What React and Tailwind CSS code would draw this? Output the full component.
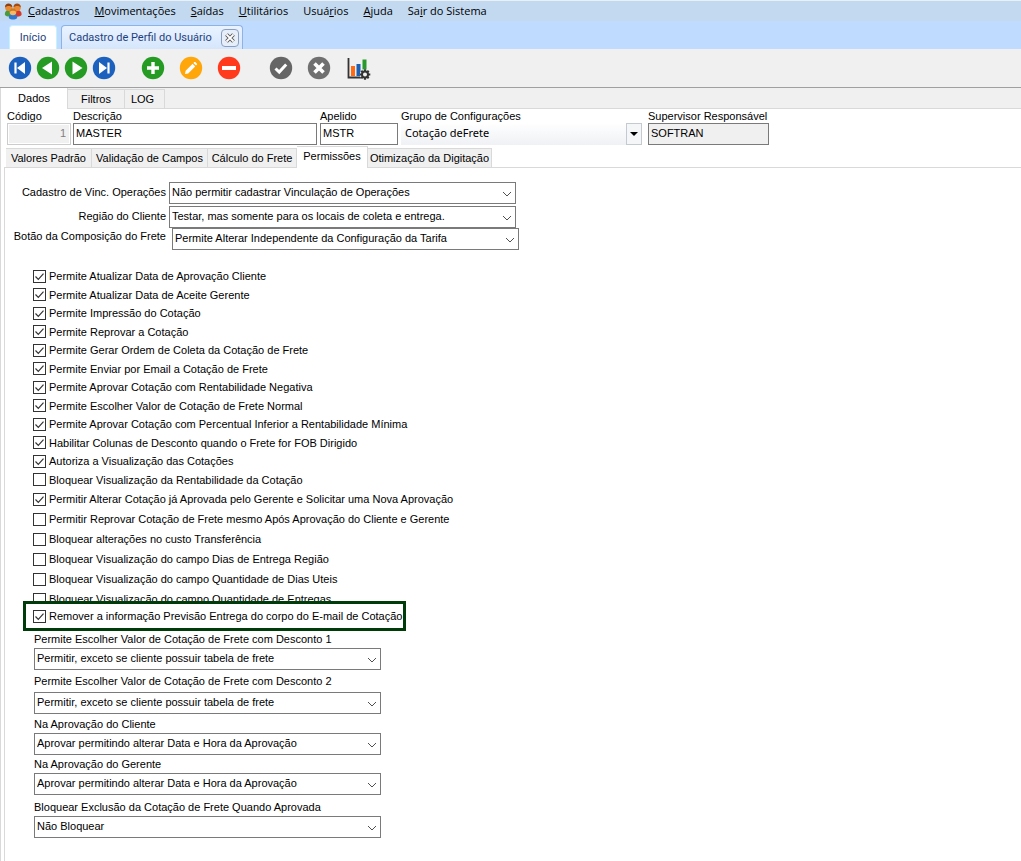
import React from 'react';

const MENU = [
  { before: '', key: 'C', after: 'adastros' },
  { before: '', key: 'M', after: 'ovimentações' },
  { before: '', key: 'S', after: 'aídas' },
  { before: '', key: 'U', after: 'tilitários' },
  { before: 'Usuá', key: 'r', after: 'ios' },
  { before: '', key: 'A', after: 'juda' },
  { before: 'Sa', key: 'i', after: 'r do Sistema' },
];

const PERMISSIONS = [
  { label: 'Permite Atualizar Data de Aprovação Cliente', checked: true },
  { label: 'Permite Atualizar Data de Aceite Gerente', checked: true },
  { label: 'Permite Impressão do Cotação', checked: true },
  { label: 'Permite Reprovar a Cotação', checked: true },
  { label: 'Permite Gerar Ordem de Coleta da Cotação de Frete', checked: true },
  { label: 'Permite Enviar por Email a Cotação de Frete', checked: true },
  { label: 'Permite Aprovar Cotação com Rentabilidade Negativa', checked: true },
  { label: 'Permite Escolher Valor de Cotação de Frete Normal', checked: true },
  { label: 'Permite Aprovar Cotação com Percentual Inferior a Rentabilidade Mínima', checked: true },
  { label: 'Habilitar Colunas de Desconto quando o Frete for FOB Dirigido', checked: true },
  { label: 'Autoriza a Visualização das Cotações', checked: true },
  { label: 'Bloquear Visualização da Rentabilidade da Cotação', checked: false },
];

const RESTRICTIONS = [
  { label: 'Permitir Alterar Cotação já Aprovada pelo Gerente e Solicitar uma Nova Aprovação', checked: true },
  { label: 'Permitir Reprovar Cotação de Frete mesmo Após Aprovação do Cliente e Gerente', checked: false },
  { label: 'Bloquear alterações no custo Transferência', checked: false },
  { label: 'Bloquear Visualização do campo Dias de Entrega Região', checked: false },
  { label: 'Bloquear Visualização do campo Quantidade de Dias Uteis', checked: false },
  { label: 'Bloquear Visualização do campo Quantidade de Entregas', checked: false },
];

const RULES = [
  { id: 'desc1', label: 'Permite Escolher Valor de Cotação de Frete com Desconto 1', value: 'Permitir, exceto se cliente possuir tabela de frete', space: 'gap-px' },
  { id: 'desc2', label: 'Permite Escolher Valor de Cotação de Frete com Desconto 2', value: 'Permitir, exceto se cliente possuir tabela de frete', space: 'mt-[3px] gap-[3px]' },
  { id: 'cliente', label: 'Na Aprovação do Cliente', value: 'Aprovar permitindo alterar Data e Hora da Aprovação', space: 'mt-0.5 gap-px' },
  { id: 'gerente', label: 'Na Aprovação do Gerente', value: 'Aprovar permitindo alterar Data e Hora da Aprovação', space: 'mt-px gap-px' },
  { id: 'exclusao', label: 'Bloquear Exclusão da Cotação de Frete Quando Aprovada', value: 'Não Bloquear', space: 'mt-1 gap-px' },
];

const Select = ({ id, value }) => (
  <div className="relative w-full max-w-[347px]">
    <select
      id={id}
      defaultValue={value}
      className="block h-[22px] w-full appearance-none border border-[#7a7a7a] bg-white pl-0.5 pr-6 pb-0.5 text-[11px] leading-4 text-black"
    >
      <option>{value}</option>
    </select>
    <svg className="pointer-events-none absolute right-1 top-2 h-2 w-2.5" viewBox="0 0 10 8" fill="none" stroke="#505050">
      <path d="M1 2l4 4 4-4" />
    </svg>
  </div>
);

const Check = ({ label, checked, className = '' }) => (
  <label className={`flex items-center gap-[3px] whitespace-nowrap ${className}`}>
    <span className="relative h-[13px] w-[13px] shrink-0">
      <input
        type="checkbox"
        defaultChecked={checked}
        className="peer block h-[13px] w-[13px] appearance-none border border-[#333] bg-white"
      />
      <svg className="pointer-events-none absolute inset-0 hidden peer-checked:block" viewBox="0 0 13 13" fill="none" stroke="#333" strokeWidth="1.2">
        <path d="M2.5 6.5l2.8 2.8 5.2-5.6" />
      </svg>
    </span>
    <span>{label}</span>
  </label>
);

const ToolButton = ({ title, color, className = '', children }) => (
  <button type="button" aria-label={title} className={`h-6 w-6 shrink-0 ${className}`}>
    <svg viewBox="0 0 24 24" className="h-6 w-6">
      <circle cx="12" cy="12" r="11.2" fill={color} />
      {children}
    </svg>
  </button>
);

const PeopleIcon = () => (
  <svg viewBox="0 0 18 18" className="h-[18px] w-[18px] shrink-0">
    <path d="M1 13c-.5-3 1-5 4-5s4 2 4 5c-2 2-6 2-8 0z" fill="#4a9a3c" />
    <path d="M9 13c0-3 1-5 4-5s5 2 4.500 5c-2 2.500-6.500 2-8.500 0z" fill="#d3382a" />
    <circle cx="4.700" cy="5.500" r="3.600" fill="#e98b35" />
    <path d="M1 5.500c-.5-5.500 7.500-5.500 7.400 0C6.500 3.500 3 3.500 1 5.500z" fill="#8d4012" />
    <circle cx="13.200" cy="5.500" r="3.600" fill="#e98b35" />
    <path d="M9.500 5.500c-.5-5.500 7.500-5.500 7.400 0-1.900-2-5.400-2-7.400 0z" fill="#a34c14" />
    <path d="M4.800 16c0-3 1.200-4.500 4.200-4.500s4.200 1.500 4.200 4.500c-2 2-6.400 2-8.400 0z" fill="#2e78d2" />
    <circle cx="9" cy="10" r="3.300" fill="#f9b766" />
    <path d="M5.600 10c-.4-5 7-5 6.800 0-1.800-1.800-5-1.800-6.800 0z" fill="#c97a22" />
  </svg>
);

const ChartIcon = () => (
  <svg viewBox="0 0 24 24" className="h-6 w-6">
    <path d="M1.500 2v19.500H16" fill="none" stroke="#333" strokeWidth="1.800" />
    <rect x="4" y="10" width="4" height="10" fill="#ff6a13" />
    <rect x="9.500" y="8" width="4" height="12" fill="#1a5fb4" />
    <rect x="15.500" y="3.500" width="4" height="10" fill="#279a2b" />
    <circle cx="18" cy="18.500" r="5.200" fill="#f0f0f0" />
    <g stroke="#333" strokeWidth="2.200">
      <path d="M18 13.200v10.600M12.700 18.500h10.600M14.300 14.800l7.400 7.400M21.700 14.800l-7.400 7.400" />
    </g>
    <circle cx="18" cy="18.500" r="3" fill="#f0f0f0" stroke="#333" strokeWidth="2" />
  </svg>
);

const Toolbar = () => (
  <div className="flex h-[38px] items-center bg-[#f0f0f0] px-2">
    <div className="flex gap-1">
      <ToolButton title="Primeiro" color="#1b61bd">
        <path d="M7.500 6.500v11" stroke="#fff" strokeWidth="2.200" />
        <path d="M17 6v12l-8-6z" fill="#fff" />
      </ToolButton>
      <ToolButton title="Anterior" color="#259b24">
        <path d="M16 5.500v13L6 12z" fill="#fff" />
      </ToolButton>
      <ToolButton title="Próximo" color="#259b24">
        <path d="M8.500 5.500v13l10-6.500z" fill="#fff" />
      </ToolButton>
      <ToolButton title="Último" color="#1b61bd">
        <path d="M16.500 6.500v11" stroke="#fff" strokeWidth="2.200" />
        <path d="M7 6v12l8-6z" fill="#fff" />
      </ToolButton>
    </div>
    <div className="ml-[25px] flex gap-3.5">
      <ToolButton title="Incluir" color="#259b24">
        <path d="M12 6v12M6 12h12" stroke="#fff" strokeWidth="3.400" />
      </ToolButton>
      <ToolButton title="Alterar" color="#ffa60a">
        <path d="M6 18l.6-3.200 7-7 2.600 2.600-7 7z" fill="#fff" />
        <path d="M14.400 7l1-1c.7-.7 3.300 1.900 2.600 2.600l-1 1z" fill="#fff" />
      </ToolButton>
      <ToolButton title="Excluir" color="#ff3a1d">
        <path d="M5 12h14" stroke="#fff" strokeWidth="4" />
      </ToolButton>
    </div>
    <div className="ml-7 flex gap-3.5">
      <ToolButton title="Confirmar" color="#666">
        <path d="M6.500 12.500l3.700 3.500 7-7.500" fill="none" stroke="#fff" strokeWidth="3" />
      </ToolButton>
      <ToolButton title="Cancelar" color="#707070">
        <path d="M7.500 7.500l9 9M16.500 7.500l-9 9" stroke="#fff" strokeWidth="3.600" />
      </ToolButton>
    </div>
    <button type="button" aria-label="Relatórios" className="ml-4 h-6 w-6">
      <ChartIcon />
    </button>
  </div>
);

const HeaderFields = () => (
  <div className="flex pl-1.5">
    <div className="mr-0.5 w-16">
      <label htmlFor="codigo" className="block h-3.5 leading-[14px]">Código</label>
      <input id="codigo" readOnly defaultValue="1" className="block h-[22px] w-full border border-[#ccc] bg-[#f0f0f0] px-1 pb-0.5 text-right text-[#808080] shadow-[inset_0_0_0_1px_#fff]" />
    </div>
    <div className="mr-[3px] w-[244px]">
      <label htmlFor="descricao" className="block h-3.5 leading-[14px]">Descrição</label>
      <input id="descricao" defaultValue="MASTER" className="block h-[22px] w-full border border-[#7a7a7a] bg-white px-0.5 pb-0.5" />
    </div>
    <div className="mr-[3px] w-[78px]">
      <label htmlFor="apelido" className="block h-3.5 leading-[14px]">Apelido</label>
      <input id="apelido" defaultValue="MSTR" className="block h-[22px] w-full border border-[#7a7a7a] bg-white px-0.5 pb-0.5" />
    </div>
    <div className="mr-1.5 w-[241px]">
      <label htmlFor="grupo" className="block h-3.5 leading-[14px]">Grupo de Configurações</label>
      <div className="relative">
        <select id="grupo" className="block h-[22px] w-full appearance-none bg-gradient-to-b from-white to-[#eff1f4] pl-1 pb-0.5 font-['Noto_Sans',sans-serif]">
          <option>Cotação deFrete</option>
        </select>
        <span className="pointer-events-none absolute right-0 top-0 flex h-[22px] w-4 items-center justify-center border border-[#c5c9d0] bg-[#f5f6f8]">
          <svg viewBox="0 0 8 4" className="h-1 w-2"><path d="M0 0h8L4 4z" /></svg>
        </span>
      </div>
    </div>
    <div className="w-[121px]">
      <label htmlFor="supervisor" className="block h-3.5 whitespace-nowrap leading-[14px]">Supervisor Responsável</label>
      <input id="supervisor" readOnly defaultValue="SOFTRAN" className="block h-[22px] w-full border border-[#7a7a7a] bg-[#f0f0f0] px-0.5 pb-0.5" />
    </div>
  </div>
);

const SubTab = ({ children, className }) => (
  <button type="button" className={`h-[19px] whitespace-nowrap border border-b-0 border-l-0 border-[#d9d9d9] bg-[#f0f0f0] ${className}`}>
    {children}
  </button>
);

const App = () => {
  return (
    <div className="flex min-h-screen flex-col bg-white font-['Liberation_Sans',Arial,sans-serif] text-[11px] leading-4 text-black">
      <nav className="flex h-[21px] items-center border-t border-[#e9f0f8] bg-[#c2d9f0] pl-1 font-['Open_Sans',sans-serif]">
        <PeopleIcon />
        <div className="flex gap-[15px] pl-1.5">
          {MENU.map((m) => (
            <button key={m.before + m.key + m.after} type="button" className="whitespace-nowrap">
              {m.before}<u>{m.key}</u>{m.after}
            </button>
          ))}
        </div>
      </nav>

      {/* Open windows */}
      <div className="flex h-7 items-end gap-1 bg-[#bfdbff] pl-[9px] font-[Roboto,sans-serif] text-[#1e3f7d]">
        <button type="button" className="h-6 w-12 rounded-t-sm border border-b-0 border-[#c5f3fb] bg-white">Início</button>
        <div className="flex h-6 w-[182px] items-center justify-between rounded-t-sm border border-b-0 border-[#8db2e3] bg-gradient-to-b from-[#eaf3ff] to-[#d5e6fc] pl-[7px] pr-[3px]">
          <button type="button" className="whitespace-nowrap">Cadastro de Perfil do Usuário</button>
          <button type="button" aria-label="Fechar" className="flex h-[18px] w-[18px] shrink-0 items-center justify-center rounded-sm border border-[#8a9fc0] bg-[#e6eefa]">
            <svg viewBox="0 0 10 10" className="h-2.5 w-2.5 shrink-0">
              <path d="M1.500 1.500l7 7M8.500 1.500l-7 7" stroke="#555" strokeWidth="3.800" />
              <path d="M1.500 1.500l7 7M8.500 1.500l-7 7" stroke="#fff" strokeWidth="1.800" />
            </svg>
          </button>
        </div>
      </div>

      <Toolbar />

      <div className="flex h-[22px] items-end border-t border-[#a0a0a0] bg-[#f0f0f0] shadow-[inset_0_-1px_0_#d9d9d9]">
        <button type="button" className="h-[21px] w-[68px] border-x border-[#d9d9d9] bg-white pb-0.5">Dados</button>
        <button type="button" className="h-5 w-[57px] border border-l-0 border-[#d9d9d9]">Filtros</button>
        <button type="button" className="h-5 w-10 border border-l-0 border-[#d9d9d9] pr-1">LOG</button>
      </div>

      <main className="flex flex-1 flex-col border-l border-[#d9d9d9]">
        <HeaderFields />

        <div className="flex h-[22px] items-end pl-[5px]">
          <SubTab className="w-[86px] border-l">Valores Padrão</SubTab>
          <SubTab className="w-[116px]">Validação de Campos</SubTab>
          <SubTab className="w-[89px]">Cálculo do Frete</SubTab>
          <button type="button" className="z-10 -mb-px h-[22px] w-[71px] border border-b-0 border-l-0 border-[#d9d9d9] bg-white pb-1">Permissões</button>
          <SubTab className="w-[124px]">Otimização da Digitação</SubTab>
        </div>

        <section className="ml-[3px] flex-1 border-l border-t border-[#d9d9d9] pt-3.5">
          <div className="flex flex-col">
            <div className="flex gap-[3px]">
              <label htmlFor="vinc" className="w-[161px] pt-0.5 text-right">Cadastro de Vinc. Operações</label>
              <Select id="vinc" value="Não permitir cadastrar Vinculação de Operações" />
            </div>
            <div className="mt-0.5 flex gap-[3px]">
              <label htmlFor="regiao" className="w-[161px] pt-0.5 text-right">Região do Cliente</label>
              <Select id="regiao" value="Testar, mas somente para os locais de coleta e entrega." />
            </div>
            <div className="flex gap-1.5">
              <label htmlFor="botao" className="w-[161px] text-right">Botão da Composição do Frete</label>
              <Select id="botao" value="Permite Alterar Independente da Configuração da Tarifa" />
            </div>
          </div>

          <div className="mt-[17px] pl-7">
            {PERMISSIONS.map((p) => (
              <Check key={p.label} {...p} className="odd:h-[18px] even:h-[19px]" />
            ))}
            {RESTRICTIONS.map((p) => (
              <Check key={p.label} {...p} className="h-5" />
            ))}
          </div>

          {/* Highlighted option */}
          <div className="relative -mt-2 ml-[18px] flex h-[30px] w-[383px] items-center border-[3px] border-[#003c0a] bg-white pl-[7px]">
            <Check label="Remover a informação Previsão Entrega do corpo do E-mail de Cotação" checked />
          </div>

          <div className="pl-[29px]">
            {RULES.map((r) => (
              <div key={r.id} className={`flex flex-col ${r.space}`}>
                <label htmlFor={r.id} className="h-4">{r.label}</label>
                <Select id={r.id} value={r.value} />
              </div>
            ))}
          </div>
        </section>
      </main>
    </div>
  );
};

export default App;
